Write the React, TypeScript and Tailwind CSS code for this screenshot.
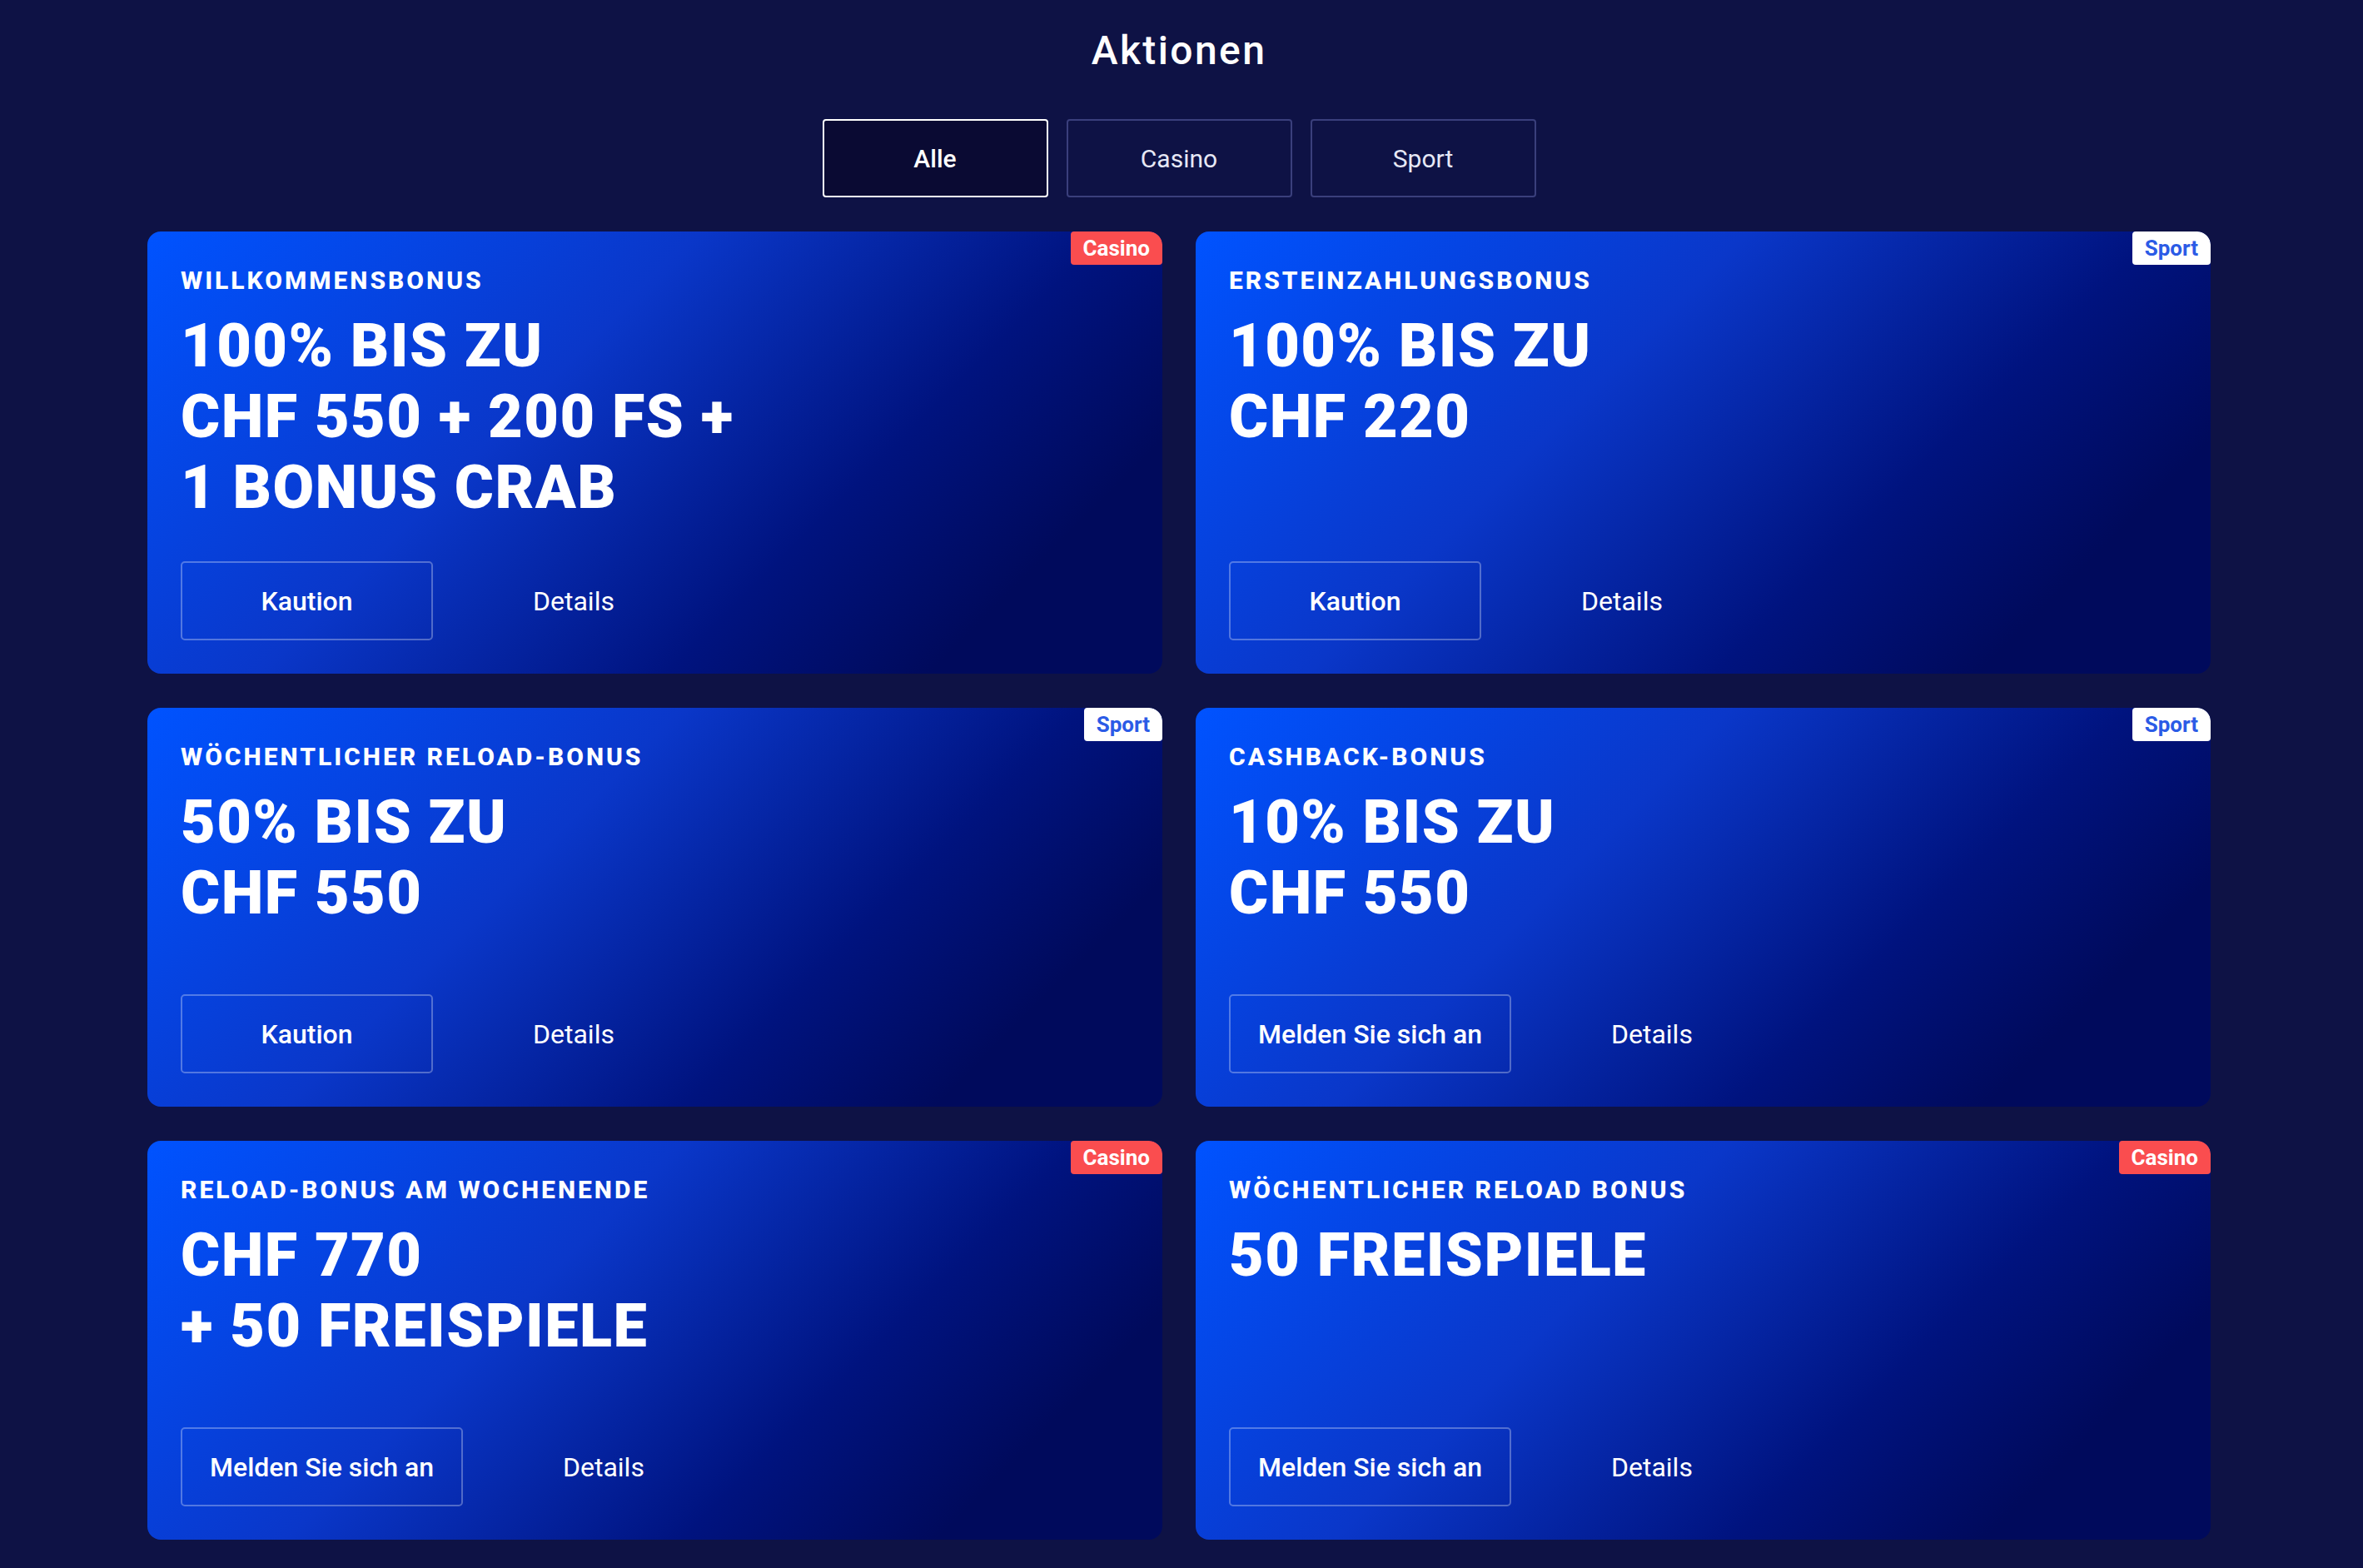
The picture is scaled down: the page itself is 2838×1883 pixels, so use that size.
import React, { useState } from 'react';

type Promo = {
  label: string;
  lines: string[];
  cta: string;
  tag: 'Casino' | 'Sport';
};

const promos: Promo[] = [
  { label: 'Willkommensbonus', lines: ['100% BIS ZU', 'CHF 550 + 200 FS +', '1 BONUS CRAB'], cta: 'Kaution', tag: 'Casino' },
  { label: 'Ersteinzahlungsbonus', lines: ['100% BIS ZU', 'CHF 220'], cta: 'Kaution', tag: 'Sport' },
  { label: 'Wöchentlicher Reload-Bonus', lines: ['50% BIS ZU', 'CHF 550'], cta: 'Kaution', tag: 'Sport' },
  { label: 'Cashback-Bonus', lines: ['10% BIS ZU', 'CHF 550'], cta: 'Melden Sie sich an', tag: 'Sport' },
  { label: 'Reload-Bonus am Wochenende', lines: ['CHF 770', '+ 50 FREISPIELE'], cta: 'Melden Sie sich an', tag: 'Casino' },
  { label: 'Wöchentlicher Reload Bonus', lines: ['50 FREISPIELE'], cta: 'Melden Sie sich an', tag: 'Casino' },
];

const filters = ['Alle', 'Casino', 'Sport'] as const;

function Tag({ tag }: { tag: Promo['tag'] }) {
  return (
    <span
      className={`absolute top-0 right-0 h-[40px] px-[15px] flex items-center text-[26px] font-bold rounded-[4px] rounded-tr-[16px] ${
        tag === 'Casino' ? 'bg-[#fa4d4f] text-white' : 'bg-white text-[#2b5be6]'
      }`}
    >
      {tag}
    </span>
  );
}

function PromoCard({ promo }: { promo: Promo }) {
  return (
    <div className="relative flex flex-col min-h-[479px] rounded-[16px] overflow-hidden pt-[41px] px-[40px] pb-[40px] bg-[linear-gradient(135deg,#0053ff_0%,#0a37c9_38%,#00137f_66%,#000a5c_84%)]">
      <Tag tag={promo.tag} />
      <div className="text-[30px] leading-[35px] font-extrabold uppercase tracking-[0.1em] text-white">{promo.label}</div>
      <h2 className="mt-[19px] text-[72px] leading-[85px] font-black text-white tracking-[0.02em]">
        {promo.lines.map((l) => (
          <div key={l}>{l}</div>
        ))}
      </h2>
      <div className="mt-auto pt-[46px] flex items-center">
        <button className="h-[95px] min-w-[303px] px-[33px] flex items-center justify-center border-2 border-white/30 rounded-[5px] text-[32px] font-medium text-white">
          {promo.cta}
        </button>
        <button className="ml-[120px] text-[32px] text-white">Details</button>
      </div>
    </div>
  );
}

export default function App() {
  const [active, setActive] = useState<(typeof filters)[number]>('Alle');
  const shown = promos.filter((p) => active === 'Alle' || p.tag === active);

  return (
    <div className="min-h-screen w-full bg-[#0e1245] font-['Roboto','Liberation_Sans',sans-serif] pb-[30px] pr-[6px]">
      <div className="w-[2478px] mx-auto flex flex-col items-center">
        <h1 className="mt-[32px] text-[48px] leading-[58px] font-medium tracking-[0.05em] text-white">Aktionen</h1>

        <div className="mt-[53px] flex gap-[22px]">
          {filters.map((f) => (
            <button
              key={f}
              onClick={() => setActive(f)}
              className={`w-[271px] h-[94px] rounded-[4px] border-2 text-[30px] ${
                active === f
                  ? 'bg-[#0a0a33] border-white text-white font-medium'
                  : 'bg-transparent border-[#3a3f7c] text-[#e6e8f5]'
              }`}
            >
              {f}
            </button>
          ))}
        </div>

        <div className="mt-[41px] w-full grid grid-cols-2 gap-x-[40px] gap-y-[41px]">
          {shown.map((p) => (
            <PromoCard key={p.label} promo={p} />
          ))}
        </div>
      </div>
    </div>
  );
}
